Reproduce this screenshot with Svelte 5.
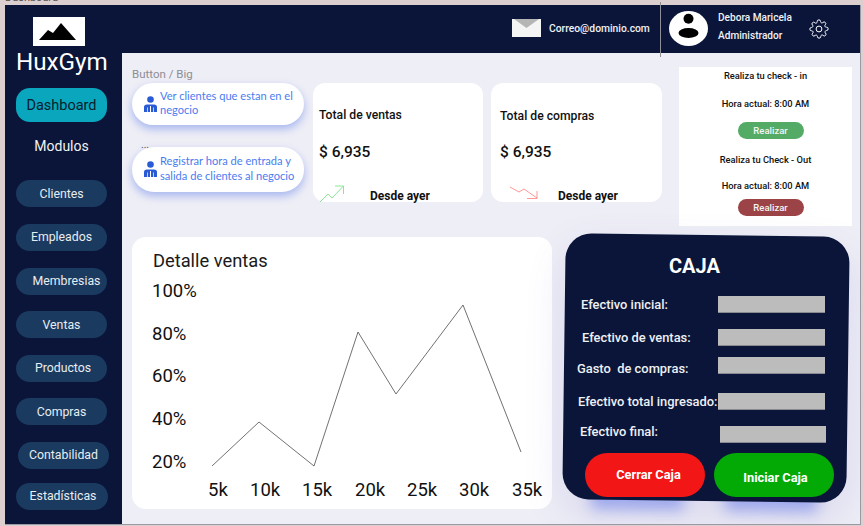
<script>
  const nav = [
    { name: 'Clientes', cls: '' },
    { name: 'Empleados', cls: '' },
    { name: 'Membresias', cls: 'right' },
    { name: 'Ventas', cls: '' },
    { name: 'Productos', cls: 'slight' },
    { name: 'Compras', cls: '' },
    { name: 'Contabilidad', cls: 'shift' },
    { name: 'Estadísticas', cls: 'wide' }
  ];
  const rows = [
    { label: 'Efectivo inicial:', cls: 'r1' },
    { label: 'Efectivo de ventas:', cls: 'r2' },
    { label: 'Gasto  de compras:', cls: 'r3' },
    { label: 'Efectivo total ingresado:', cls: 'r4' },
    { label: 'Efectivo final:', cls: 'r5' }
  ];
  const points = '212,466 259,422 314,466 358,332 396,394 463,305 521,452';
  const yLabels = [['100%', 297], ['80%', 340], ['60%', 382], ['40%', 425], ['20%', 468]];
  const xLabels = [['5k', 208], ['10k', 250], ['15k', 302], ['20k', 355], ['25k', 407], ['30k', 459], ['35k', 512]];
</script>

<div class="page">
  <div class="title">Dashboard</div>
  <div class="frame">
    <aside class="side">
      <div class="logo">
        <svg width="37" height="17" viewBox="0 0 37 17"><path d="M0 17 L9 7 L14 10 L22 0 L37 17 Z" fill="#000"/></svg>
      </div>
      <div class="brand">HuxGym</div>
      <div class="dash">Dashboard</div>
      <div class="mod">Modulos</div>
      <nav class="nav">
        {#each nav as n}
          <div class="pill {n.cls}"><span>{n.name}</span></div>
        {/each}
      </nav>
    </aside>

    <div class="content">
      <header class="top">
        <svg class="mail" width="29" height="18" viewBox="0 0 29 18">
          <rect width="29" height="18" fill="#f4f4f4"/>
          <path d="M2 0 L14.500 9 L27 0 Z" fill="#b5b5b5"/>
        </svg>
        <span class="email">Correo@dominio.com</span>
        <span class="sep"></span>
        <div class="avatar">
          <svg width="39" height="35" viewBox="0 0 39 35">
            <ellipse cx="19.500" cy="17.500" rx="19.500" ry="17.500" fill="#fff"/>
            <circle cx="19.500" cy="7.700" r="5" fill="#000"/>
            <ellipse cx="19.500" cy="22" rx="10" ry="5" fill="#000"/>
          </svg>
        </div>
        <div class="user"><span>Debora Maricela</span><span>Administrador</span></div>
        <svg class="gear" width="20" height="20" viewBox="0 0 24 24" fill="none" stroke="#fff" stroke-width="1.200" stroke-linejoin="round">
          <circle cx="12" cy="12" r="3.500"/>
          <path d="M19.400 15a1.650 1.650 0 0 0 .33 1.820l.06.06a2 2 0 1 1-2.830 2.830l-.06-.06a1.650 1.650 0 0 0-2.800 1.170V21a2 2 0 0 1-4 0v-.09a1.650 1.650 0 0 0-2.800-1.120l-.06.06a2 2 0 1 1-2.830-2.830l.06-.06a1.650 1.650 0 0 0-1.170-2.800H3a2 2 0 0 1 0-4h.09a1.650 1.650 0 0 0 1.120-2.800l-.06-.06a2 2 0 1 1 2.830-2.830l.06.06a1.650 1.650 0 0 0 2.800-1.170V3a2 2 0 0 1 4 0v.09a1.650 1.650 0 0 0 2.800 1.120l.06-.06a2 2 0 1 1 2.830 2.830l-.06.06a1.650 1.650 0 0 0 1.170 2.800H21a2 2 0 0 1 0 4h-.09a1.650 1.650 0 0 0-1.510 1z"/>
        </svg>
      </header>

      <main class="main">
        <section class="upper">
          <div class="actions">
            <div class="crumb">Button / Big</div>
            <div class="action a1">
              <svg class="person" width="13" height="17" viewBox="0 0 13 17"><circle cx="6.500" cy="3.500" r="3.300" fill="#2a5bd7"/><path d="M0 16 V11 Q0 8.500 3 8.500 H10 Q13 8.500 13 11 V16 H10 V11.500 H9.300 V16 H7 V10 H6 V16 H3.700 V11.500 H3 V16 Z" fill="#2a5bd7"/></svg>
              <span>Ver clientes que estan en el negocio</span>
            </div>
            <div class="dots">...</div>
            <div class="action a2">
              <svg class="person" width="13" height="17" viewBox="0 0 13 17"><circle cx="6.500" cy="3.500" r="3.300" fill="#2a5bd7"/><path d="M0 16 V11 Q0 8.500 3 8.500 H10 Q13 8.500 13 11 V16 H10 V11.500 H9.300 V16 H7 V10 H6 V16 H3.700 V11.500 H3 V16 Z" fill="#2a5bd7"/></svg>
              <span>Registrar hora de entrada y salida de clientes al negocio</span>
            </div>
          </div>

          <div class="stat s1">
            <div class="stat-t">Total de ventas</div>
            <div class="stat-v">$ 6,935</div>
            <div class="stat-f">
              <svg width="26" height="18" viewBox="0 0 26 18" fill="none" stroke="#6fe07a" stroke-width="0.800"><path d="M1 17 L9 9 L13 13 L24 1.500 M16 1 H24.500 V9"/></svg>
              <span>Desde ayer</span>
            </div>
          </div>
          <div class="stat s2">
            <div class="stat-t">Total de compras</div>
            <div class="stat-v">$ 6,935</div>
            <div class="stat-f">
              <svg width="30" height="14" viewBox="0 0 30 14" fill="none" stroke="#ff7d7d" stroke-width="0.800"><path d="M1 1 L10 6 L15 3 L28 12 M28 5 V12.500 H18"/></svg>
              <span>Desde ayer</span>
            </div>
          </div>

          <div class="check">
            <p class="c1">Realiza tu check - in</p>
            <p class="c2">Hora actual: 8:00 AM</p>
            <div class="btn green">Realizar</div>
            <p class="c3">Realiza tu Check - Out</p>
            <p class="c4">Hora actual: 8:00 AM</p>
            <div class="btn red">Realizar</div>
          </div>
        </section>

        <section class="lower">
          <div class="chart">
            <svg width="420" height="272" viewBox="132 237 420 272">
              <text class="ct" x="153" y="267">Detalle ventas</text>
              {#each yLabels as [t, y]}
                <text class="cl" x="152" y={y}>{t}</text>
              {/each}
              {#each xLabels as [t, x]}
                <text class="cl" x={x} y="496">{t}</text>
              {/each}
              <polyline points={points} fill="none" stroke="#333" stroke-width="0.700"/>
            </svg>
          </div>

          <div class="caja">
            <h2>CAJA</h2>
            {#each rows as r}
              <div class="row {r.cls}">
                <span>{r.label}</span>
                <i></i>
              </div>
            {/each}
            <div class="cta">
              <div class="close">Cerrar Caja</div>
              <div class="open">Iniciar Caja</div>
            </div>
          </div>
        </section>
      </main>
    </div>
  </div>
</div>

<style>
  :global(body) { margin: 0; background: #dccfd0; }
  .page { width: 863px; height: 526px; overflow: hidden; font-family: Roboto, sans-serif; box-sizing: border-box; padding-left: 5px; }
  .title { height: 5px; font-size: 11px; line-height: 11px; color: #555; transform: translateY(-8px); }
  .frame { width: 856px; height: 520px; display: flex; box-sizing: border-box; border-right: 1px solid #9a9aa4; border-bottom: 1px solid #9a9aa4; background: #0a1539; }

  .side { width: 117px; flex: none; display: flex; flex-direction: column; align-items: flex-start; background: #0a1539; color: #fff; }
  .logo { width: 52px; height: 29px; margin: 12px 0 0 28px; background: #fff; display: flex; align-items: flex-start; box-sizing: border-box; padding: 6px 0 0 6px; }
  .logo svg { display: block; }
  .brand { font-size: 24.200px; line-height: 30px; margin: 1px 0 0 11px; }
  .dash { width: 91px; height: 34px; margin: 11px 0 0 11px; border-radius: 14px; background: #0aa6be; color: #06202c; font-size: 14.500px; display: flex; align-items: center; justify-content: center; }
  .mod { width: 91px; margin: 15px 0 0 11px; text-align: center; font-size: 14px; line-height: 18px; color: #f2f2f2; }
  .nav { display: flex; flex-direction: column; margin: 25.400px 0 0 11px; gap: 16.600px; }
  .pill { width: 91px; height: 27px; border-radius: 14px; background: #1a3a5f; color: #e8edf2; font-size: 12.300px; display: flex; align-items: center; justify-content: center; }
  .pill.right span { margin-left: 10px; }
  .pill.slight span { margin-left: 3px; }
  .pill.shift { margin-left: 2px; }
  .pill.wide { width: 92px; margin-top: -3px; }
  .pill.wide span { margin-left: 2px; }

  .content { width: 738px; display: flex; flex-direction: column; }
  .top { height: 48px; flex: none; display: flex; align-items: center; position: relative; color: #f0f2f6; }
  .mail { margin-left: 390px; margin-top: -2px; filter: blur(0.600px); }
  .email { margin-left: 8px; margin-top: -2px; font-size: 10.300px; font-weight: 500; width: 111px; white-space: nowrap; }
  .sep { position: absolute; left: 538px; top: -3px; width: 1px; height: 55px; background: #8e8e96; }
  .avatar { margin-left: 9px; height: 35px; margin-top: -1px; }
  .avatar svg { display: block; }
  .user { margin-left: 10px; display: flex; flex-direction: column; gap: 7px; font-size: 10.100px; font-weight: 500; line-height: 11px; width: 91px; margin-top: -6px; }
  .gear { margin-top: 0; }

  .main { flex: 1; background: #eeeef6; padding: 14px 0 0 10px; overflow: hidden; }
  .upper { display: flex; align-items: flex-start; height: 159px; }
  .actions { width: 172px; flex: none; }
  .crumb { font-size: 11.500px; line-height: 13px; color: #8d8d93; margin: 1px 0 2px; }
  .action { display: flex; align-items: center; background: #fff; border-radius: 22px; box-shadow: 0 4px 8px rgba(60, 100, 230, 0.4); color: #4a7cf0; font-family: Lato, sans-serif; font-size: 11.100px; line-height: 14.500px; box-sizing: border-box; padding-left: 12px; }
  .action span { margin: -2px 0 0 3px; }
  .a1 { height: 42px; }
  .dots { height: 22px; font-size: 10px; line-height: 10px; color: #555; padding: 15px 0 0 9px; box-sizing: border-box; }
  .a2 { height: 45px; }
  .person { flex: none; }

  .stat { width: 170px; height: 119px; margin-top: 16px; background: #fff; border-radius: 12px; flex: none; box-sizing: border-box; padding-left: 6px; color: #111; }
  .s1 { margin-left: 9px; }
  .s2 { margin-left: 8px; width: 171px; padding-left: 9px; }
  .stat-t { font-size: 12.200px; font-weight: 500; line-height: 15px; margin-top: 25px; }
  .s2 .stat-t { margin-top: 26px; }
  .stat-v { font-size: 15.500px; font-weight: 500; line-height: 20px; margin-top: 19px; }
  .s2 .stat-v { margin-top: 18px; }
  .stat-f { display: flex; align-items: flex-start; font-size: 12px; font-weight: 700; line-height: 14px; margin-top: 26px; }
  .s1 .stat-f svg { margin: -3px 25px 0 0; }
  .s2 .stat-f svg { margin: -2px 19px 0 9px; }
  .stat-f span { margin-top: 1px; }

  .check { width: 173px; height: 159px; margin-left: 17px; flex: none; background: #fff; color: #111; font-size: 9.300px; font-weight: 500; display: flex; flex-direction: column; align-items: center; }
  .check p { margin: 0; line-height: 12px; white-space: nowrap; }
  .c1 { margin-top: 3px !important; }
  .c2 { margin-top: 16px !important; }
  .c3 { margin-top: 15px !important; }
  .c4 { margin-top: 14px !important; }
  .btn { width: 66px; height: 17px; border-radius: 9px; color: #f5f5f5; font-size: 9.500px; display: flex; align-items: center; justify-content: center; margin-left: 10px; }
  .green { background: #54ab65; margin-top: 12px; }
  .red { background: #9b4346; margin-top: 7px; }

  .lower { display: flex; margin-top: 11px; align-items: flex-start; }
  .chart { width: 420px; height: 272px; background: #fff; border-radius: 14px; flex: none; }
  .chart svg { display: block; }
  .ct { font-family: Roboto, sans-serif; font-size: 18.300px; fill: #1a1a1a; }
  .cl { font-family: Roboto, sans-serif; font-size: 18.500px; fill: #111; }

  .caja { width: 285px; height: 266px; margin: -3px 0 0 11px; position: relative; flex: none; color: #eef0f4; }
  .caja::before { content: ''; position: absolute; inset: 1px 1px -1px 0.500px; background: #0a1539; border-radius: 26px; transform: rotate(0.75deg); box-shadow: -67px 106px 14px -96px rgba(50, 80, 230, 0.36), 67px 106px 14px -96px rgba(50, 80, 230, 0.36), 0 16px 40px rgba(90, 80, 190, 0.14); }
  .caja > * { position: relative; }
  .caja h2 { margin: 0; font-size: 20px; font-weight: 700; line-height: 24px; padding: 20px 0 0 106px; color: #fff; }
  .row { display: flex; align-items: center; font-size: 12.900px; font-weight: 500; white-space: pre; }
  .row span { display: block; }
  .row i { display: block; width: 107px; height: 17px; background: #bcbcbc; box-sizing: border-box; border-bottom: 1px solid #8a8a92; margin-left: auto; margin-right: 23px; }
  .r1 { padding-left: 18px; margin-top: 18px; }
  .r2 { padding-left: 19px; margin-top: 16px; }
  .r3 { padding-left: 14px; margin-top: 11px; }
  .r3 span { margin: 3px 0 -3px; }
  .r4 { padding-left: 15px; margin-top: 19px; }
  .r5 { padding-left: 17px; margin-top: 16px; }
  .r5 span { margin: -3px 0 3px; }
  .r5 i { width: 106px; margin-right: 22px; }
  .cta { display: flex; gap: 9px; margin: 10px 0 0 22px; }
  .cta div { width: 120px; height: 44px; box-sizing: border-box; border-radius: 22px; display: flex; align-items: center; justify-content: center; font-size: 12.800px; font-weight: 700; color: #fff; }
  .close { background: #f21616; padding: 0 0 1px 7px; }
  .open { background: #03a904; padding: 4px 0 0 3px; }
</style>
